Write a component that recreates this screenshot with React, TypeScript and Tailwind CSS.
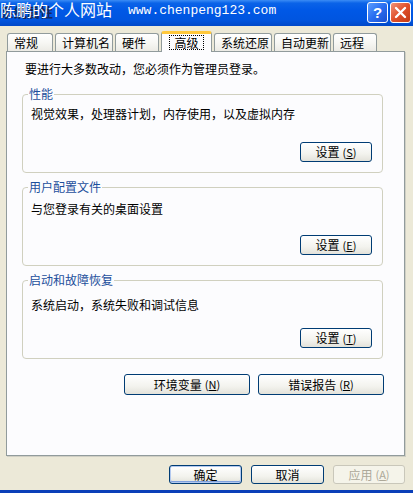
import React from "react";

const cjk = '"Noto Sans CJK SC", "Liberation Sans", sans-serif';

function XPButton({ label, mn, disabled, isDefault, className = "" }: { label: string; mn?: string; disabled?: boolean; isDefault?: boolean; className?: string }) {
  return (
    <div
      className={
        "flex items-center justify-center rounded-[3px] border text-[12px] leading-none " +
        (disabled
          ? "border-[#c9c7ba] bg-[#f5f4ea] text-[#aca899] "
          : "border-[#003c74] bg-[linear-gradient(to_bottom,#ffffff_0%,#f3f3ee_60%,#e3e2da_100%)] text-black ") +
        (isDefault ? "shadow-[inset_0_0_0_1px_#b3c9ef,inset_0_-1px_0_1px_#7fa0dd] " : "") +
        className
      }
    >
      <span>{label}</span>
      {mn && (
        <span className="ml-[3px] text-[11px]">
          (<span className="underline">{mn}</span>)
        </span>
      )}
    </div>
  );
}

function Group({ title, desc, btn, mn, descTop }: { title: string; desc: string; btn: string; mn: string; descTop: string }) {
  return (
    <div className="relative h-[79px] w-[361px] rounded-[4px] border border-[#d0d0bf]">
      <div className="absolute left-[5px] top-[-8px] bg-[#fcfcfe] px-[1px] text-[12px] leading-[14px] text-[#1d4f9c]">
        {title}
      </div>
      <div className={"flex h-full flex-col " + descTop}>
        <div className="pl-[8px] text-[12px] leading-[14px] text-black">{desc}</div>
        <div className="mt-auto mb-[10px] flex justify-end pr-[10px]">
          <XPButton label={btn} mn={mn} className="h-[20px] w-[72px]" />
        </div>
      </div>
    </div>
  );
}

function Tab({ label, w, selected }: { label: string; w: string; selected?: boolean }) {
  if (selected) {
    return (
      <div
        className={
          "relative z-10 -mb-[1px] flex h-[21px] items-start justify-center rounded-t-[3px] border-x border-t-[3px] border-x-[#919b9c] border-t-[#ffc83c] bg-[#fcfcfe] pt-[1px] " +
          w
        }
      >
        <span className="border border-dotted border-black px-[4px] text-[12px] leading-[13px] text-black">{label}</span>
      </div>
    );
  }
  return (
    <div
      className={
        "flex h-[18px] items-center rounded-t-[3px] border-x border-t border-[#919b9c] bg-[linear-gradient(to_bottom,#ffffff_0%,#f7f7f4_50%,#ecebe5_100%)] pl-[6px] text-[12px] leading-none text-black " +
        w
      }
    >
      {label}
    </div>
  );
}

export default function App() {
  return (
    <div className="flex h-[493px] w-[413px] flex-col overflow-hidden bg-[#ece9d8]" style={{ fontFamily: cjk }}>
      {/* title bar */}
      <div className="relative h-[26px] shrink-0 bg-[linear-gradient(to_bottom,#3b8cf5_0%,#0a63e8_12%,#0058e6_40%,#0055e0_75%,#0048c8_100%)]">
        <div className="absolute left-[1px] top-[4px] text-[13px] font-bold leading-[16px] text-[#12285a]">系统属性</div>
        <div className="absolute left-[0px] top-[-1px] text-[16px] leading-[20px] text-white">陈鹏的个人网站</div>
        <div
          className="absolute left-[128px] top-[3px] text-[13px] leading-[16px] text-white"
          style={{ fontFamily: '"Liberation Mono", monospace' }}
        >
          www.chenpeng123.com
        </div>
        <div className="absolute right-[25px] top-[2px] flex h-[21px] w-[21px] items-center justify-center rounded-[3px] border border-white bg-[linear-gradient(135deg,#5b9dff_0%,#2a6ef0_50%,#1b4fd0_100%)] text-[15px] font-bold leading-none text-white">
          <span style={{ fontFamily: '"Liberation Sans", sans-serif' }}>?</span>
        </div>
        <div className="absolute right-[2px] top-[2px] flex h-[21px] w-[21px] items-center justify-center rounded-[3px] border border-white bg-[linear-gradient(135deg,#f0937a_0%,#e0502a_50%,#c23a16_100%)]">
          <svg width="13" height="13" viewBox="0 0 13 13">
            <path d="M2 2 L11 11 M11 2 L2 11" stroke="white" strokeWidth="2.4" strokeLinecap="round" />
          </svg>
        </div>
      </div>

      {/* body */}
      <div className="flex flex-1 flex-col pl-[6px] pr-[8px]">
        {/* tabs */}
        <div className="mt-[5px] flex items-end gap-[2px] pl-[1px]">
          <Tab label="常规" w="w-[46px]" />
          <Tab label="计算机名" w="w-[58px]" />
          <Tab label="硬件" w="w-[44px]" />
          <Tab label="高级" w="w-[51px]" selected />
          <Tab label="系统还原" w="w-[58px]" />
          <Tab label="自动更新" w="w-[57px]" />
          <Tab label="远程" w="w-[44px]" />
        </div>

        {/* panel */}
        <div className="flex h-[405px] flex-col border border-[#919b9c] bg-[#fcfcfe] pl-[15px] shadow-[1px_1px_0_#d0cfc4]">
          <div className="mt-[10px] pl-[3px] text-[12px] leading-[14px] text-black">
            要进行大多数改动，您必须作为管理员登录。
          </div>
          <div className="mt-[18px] flex flex-col gap-[14px]">
            <Group title="性能" desc="视觉效果，处理器计划，内存使用，以及虚拟内存" btn="设置" mn="S" descTop="pt-[12px]" />
            <Group title="用户配置文件" desc="与您登录有关的桌面设置" btn="设置" mn="E" descTop="pt-[14px]" />
            <Group title="启动和故障恢复" desc="系统启动，系统失败和调试信息" btn="设置" mn="T" descTop="pt-[17px]" />
          </div>
          <div className="mt-[15px] flex gap-[8px] pl-[102px]">
            <XPButton label="环境变量" mn="N" className="h-[21px] w-[126px]" />
            <XPButton label="错误报告" mn="R" className="h-[21px] w-[126px]" />
          </div>
        </div>

        {/* bottom buttons */}
        <div className="mt-[9px] flex justify-end gap-[9px]">
          <XPButton label="确定" isDefault className="h-[19px] w-[73px]" />
          <XPButton label="取消" className="h-[19px] w-[73px]" />
          <XPButton label="应用" mn="A" disabled className="h-[19px] w-[72px]" />
        </div>
        <div className="flex-1" />
      </div>
      <div className="h-[3px] shrink-0 bg-[#0a3fb8]" />
    </div>
  );
}
